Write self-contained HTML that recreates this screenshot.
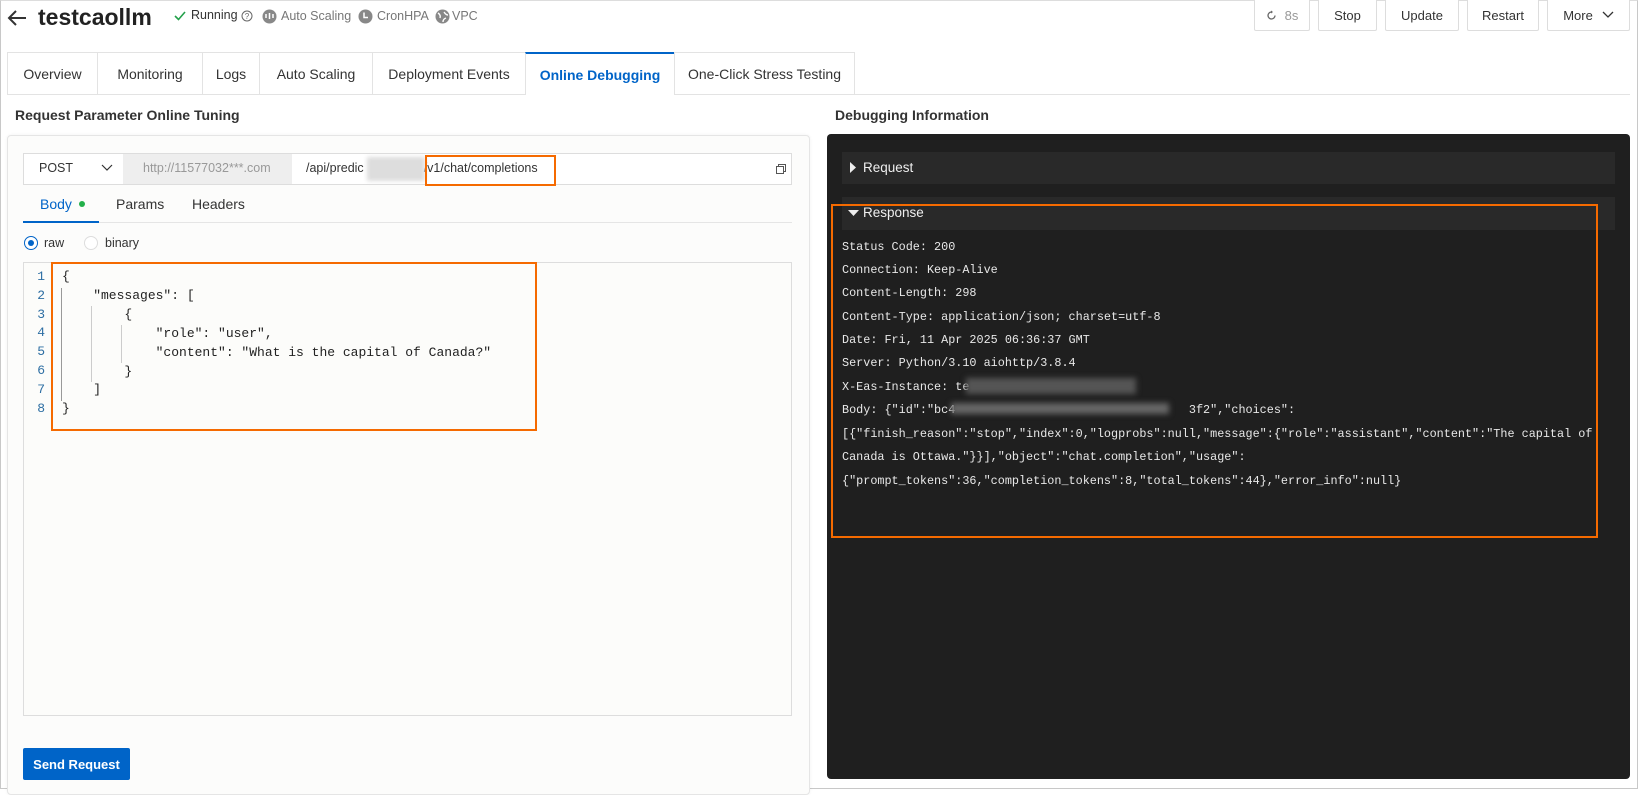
<!DOCTYPE html>
<html><head><meta charset="utf-8">
<style>
*{box-sizing:border-box;margin:0;padding:0}
body{width:1638px;height:789px;position:relative;overflow:hidden;background:#fff;font-family:"Liberation Sans",Arial,sans-serif;color:#333;font-size:13px}
.abs{position:absolute}
.btn{position:absolute;top:0;height:31px;border:1px solid #ddd;border-top:none;border-radius:0 0 2px 2px;background:#fff;font-size:13px;color:#333;display:flex;align-items:center;justify-content:center}
.tab{position:absolute;top:52px;height:42px;border:1px solid #e3e3e3;border-bottom:none;display:flex;align-items:center;justify-content:center;font-size:14px;color:#333;background:#fff}
.mono{font-family:"Liberation Mono",monospace}
.ln{position:absolute;left:23px;width:22px;text-align:right;color:#2d6ea3;font-family:"Liberation Mono",monospace;font-size:13px}
.code{position:absolute;font-family:"Liberation Mono",monospace;font-size:13px;color:#222;white-space:pre}
.rl{position:absolute;left:842px;font-family:"Liberation Mono","Noto Serif CJK SC",monospace;font-size:11.8px;color:#e8e8e8;white-space:pre}
.blur{position:absolute;background:#9a9a9a;filter:blur(3px);opacity:.6}
</style></head><body>
<div class="abs" style="left:0;top:0;width:1638px;height:789px;border:1px solid #c8c8c8;border-top:1px solid #ddd"></div>

<svg class="abs" style="left:6px;top:9px" width="22" height="18" viewBox="0 0 22 18"><path d="M20 9H3M10 2L3 9l7 7" fill="none" stroke="#333" stroke-width="2"/></svg>
<div class="abs" style="left:38px;top:4px;font-size:23px;font-weight:bold;color:#222">testcaollm</div>
<svg class="abs" style="left:174px;top:11px" width="12" height="10"><path d="M1 5l3.5 3.5L11 1" fill="none" stroke="#23a04a" stroke-width="1.6"/></svg>
<div class="abs" style="left:191px;top:8px;font-size:12.5px;color:#333">Running</div>
<svg class="abs" style="left:241px;top:10px" width="12" height="12"><circle cx="6" cy="6" r="5" fill="none" stroke="#666"/><text x="6" y="9" font-size="8" text-anchor="middle" fill="#666" font-family="Liberation Sans">?</text></svg>
<svg class="abs" style="left:262px;top:9px" width="15" height="15"><circle cx="7.5" cy="7.5" r="7" fill="#888"/><path d="M4 5v4M7.5 4v6M11 5v4" stroke="#fff" stroke-width="1.5"/></svg>
<div class="abs" style="left:281px;top:9px;font-size:12.5px;color:#777">Auto Scaling</div>
<svg class="abs" style="left:358px;top:9px" width="15" height="15"><circle cx="7.5" cy="7.5" r="7" fill="#888"/><path d="M6 3.5v5h4" stroke="#fff" stroke-width="1.5" fill="none"/></svg>
<div class="abs" style="left:377px;top:9px;font-size:12.5px;color:#777">CronHPA</div>
<svg class="abs" style="left:435px;top:9px" width="15" height="15"><circle cx="7.5" cy="7.5" r="7" fill="#888"/><path d="M3 4q3 2 2 5M9 3q2 3 4 3M8 13q0-3 3-4" stroke="#fff" stroke-width="1.4" fill="none"/></svg>
<div class="abs" style="left:452px;top:9px;font-size:12.5px;color:#777">VPC</div>

<div class="btn" style="left:1254px;width:56px;color:#999"><svg width="11" height="11" style="margin-right:8px"><path d="M9 5.5A3.5 3.5 0 1 1 5.5 2" fill="none" stroke="#666" stroke-width="1.3"/><path d="M5 0.5l2 1.5-2 1.5" fill="#666"/></svg>8s</div>
<div class="btn" style="left:1318px;width:59px">Stop</div>
<div class="btn" style="left:1385px;width:74px">Update</div>
<div class="btn" style="left:1467px;width:72px">Restart</div>
<div class="btn" style="left:1547px;width:83px">More<svg width="12" height="8" style="margin-left:9px"><path d="M1 1l5 5 5-5" fill="none" stroke="#333" stroke-width="1.3"/></svg></div>

<div class="abs" style="left:7px;top:94px;width:1623px;height:1px;background:#e3e3e3"></div>
<div class="tab" style="left:7px;width:91px">Overview</div>
<div class="tab" style="left:97px;width:106px">Monitoring</div>
<div class="tab" style="left:202px;width:58px">Logs</div>
<div class="tab" style="left:259px;width:114px">Auto Scaling</div>
<div class="tab" style="left:372px;width:154px">Deployment Events</div>
<div class="tab" style="left:525px;width:150px;height:43px;border-top:2px solid #0064c8;color:#0064c8;font-weight:bold;background:#fff">Online Debugging</div>
<div class="tab" style="left:674px;width:181px">One-Click Stress Testing</div>

<div class="abs" style="left:15px;top:107px;font-size:14px;font-weight:bold;color:#333">Request Parameter Online Tuning</div>
<div class="abs" style="left:835px;top:107px;font-size:14px;font-weight:bold;color:#333">Debugging Information</div>

<div class="abs" style="left:7px;top:135px;width:803px;height:660px;border:1px solid #e5e5e5;border-radius:4px;background:#fcfcfb;box-shadow:0 0 3px rgba(0,0,0,.06)"></div>
<div class="abs" style="left:23px;top:153px;width:769px;height:32px;border:1px solid #ddd;background:#fff"></div>
<div class="abs" style="left:39px;top:161px;font-size:12.5px">POST</div>
<svg class="abs" style="left:101px;top:164px" width="12" height="8"><path d="M1 1l5 5 5-5" fill="none" stroke="#333" stroke-width="1.2"/></svg>
<div class="abs" style="left:123px;top:154px;width:169px;height:30px;background:#eee"></div>
<div class="abs" style="left:143px;top:161px;font-size:12.5px;color:#999">http://11577032***.com</div>
<div class="abs" style="left:306px;top:161px;font-size:12.5px;color:#333;white-space:nowrap">/api/predic<span style="display:inline-block;width:60px"></span>/v1/chat/completions</div>
<div class="blur" style="left:367px;top:157px;width:58px;height:24px;background:#ddd;opacity:1;filter:blur(2px)"></div>
<div class="abs" style="left:425px;top:155px;width:131px;height:31px;border:2px solid #f56a00"></div>
<svg class="abs" style="left:776px;top:164px" width="10" height="10"><rect x="0.5" y="2.5" width="7" height="7" fill="none" stroke="#555"/><path d="M2.5 2.5V.5h7v7h-2" fill="none" stroke="#555"/></svg>

<div class="abs" style="left:40px;top:196px;font-size:14px;color:#0064c8">Body</div>
<div class="abs" style="left:79px;top:201px;width:6px;height:6px;border-radius:50%;background:#23b04a"></div>
<div class="abs" style="left:116px;top:196px;font-size:14px">Params</div>
<div class="abs" style="left:192px;top:196px;font-size:14px">Headers</div>
<div class="abs" style="left:23px;top:222px;width:769px;height:1px;background:#e5e5e5"></div>
<div class="abs" style="left:23px;top:221px;width:76px;height:2px;background:#0064c8"></div>

<div class="abs" style="left:24px;top:236px;width:14px;height:14px;border-radius:50%;border:1px solid #0064c8;background:#fff"></div>
<div class="abs" style="left:28px;top:240px;width:6px;height:6px;border-radius:50%;background:#0064c8"></div>
<div class="abs" style="left:44px;top:236px;font-size:12.5px">raw</div>
<div class="abs" style="left:84px;top:236px;width:14px;height:14px;border-radius:50%;border:1px solid #ddd;background:#fff"></div>
<div class="abs" style="left:105px;top:236px;font-size:12.5px">binary</div>

<div class="abs" style="left:23px;top:262px;width:769px;height:454px;border:1px solid #ddd;background:#fcfcfa"></div>
<div class="abs" style="left:61px;top:288px;width:1px;height:113px;background:#999"></div>
<div class="abs" style="left:91px;top:306px;width:1px;height:76px;background:#ccc"></div>
<div class="abs" style="left:121px;top:325px;width:1px;height:38px;background:#ccc"></div>
<div class="ln" style="top:269px">1</div><div class="ln" style="top:288px">2</div><div class="ln" style="top:307px">3</div><div class="ln" style="top:325px">4</div><div class="ln" style="top:344px">5</div><div class="ln" style="top:363px">6</div><div class="ln" style="top:382px">7</div><div class="ln" style="top:401px">8</div>
<div class="code" style="left:62px;top:268px;line-height:18.9px">{
    "messages": [
        {
            "role": "user",
            "content": "What is the capital of Canada?"
        }
    ]
}</div>
<div class="abs" style="left:51px;top:262px;width:486px;height:169px;border:2px solid #f56a00"></div>

<div class="abs" style="left:23px;top:748px;width:107px;height:32px;background:#0064c8;border-radius:2px;color:#fff;font-size:13px;font-weight:bold;display:flex;align-items:center;justify-content:center">Send Request</div>

<div class="abs" style="left:827px;top:134px;width:803px;height:645px;background:#1f1f1f;border-radius:4px"></div>
<div class="abs" style="left:842px;top:152px;width:773px;height:32px;background:#292929"></div>
<svg class="abs" style="left:850px;top:162px" width="7" height="11"><path d="M0 0l6 5.5L0 11z" fill="#eee"/></svg>
<div class="abs" style="left:863px;top:160px;font-size:13.5px;color:#eee">Request</div>
<div class="abs" style="left:842px;top:197px;width:773px;height:33px;background:#292929"></div>
<svg class="abs" style="left:848px;top:210px" width="11" height="7"><path d="M0 0h11L5.5 6z" fill="#eee"/></svg>
<div class="abs" style="left:863px;top:205px;font-size:13.5px;color:#eee">Response</div>

<div class="rl" style="top:240px">Status Code: 200</div>
<div class="rl" style="top:263px">Connection: Keep-Alive</div>
<div class="rl" style="top:286px">Content-Length: 298</div>
<div class="rl" style="top:310px">Content-Type: application/json; charset=utf-8</div>
<div class="rl" style="top:333px">Date: Fri, 11 Apr 2025 06:36:37 GMT</div>
<div class="rl" style="top:356px">Server: Python/3.10 aiohttp/3.8.4</div>
<div class="rl" style="top:380px">X-Eas-Instance: te</div>
<div class="rl" style="top:403px">Body: {"id":"bc4                                 3f2","choices":</div>
<div class="rl" style="top:427px">[{"finish_reason":"stop","index":0,"logprobs":null,"message":{"role":"assistant","content":"The capital of</div>
<div class="rl" style="top:450px">Canada is Ottawa."}}],"object":"chat.completion","usage":</div>
<div class="rl" style="top:474px">{"prompt_tokens":36,"completion_tokens":8,"total_tokens":44},"error_info":null}</div>
<div class="blur" style="left:966px;top:378px;width:170px;height:16px;background:#555;opacity:1"></div>
<div class="blur" style="left:951px;top:403px;width:218px;height:11px;background:#666;opacity:1"></div>
<div class="abs" style="left:831px;top:204px;width:767px;height:334px;border:2px solid #f56a00"></div>
</body></html>
